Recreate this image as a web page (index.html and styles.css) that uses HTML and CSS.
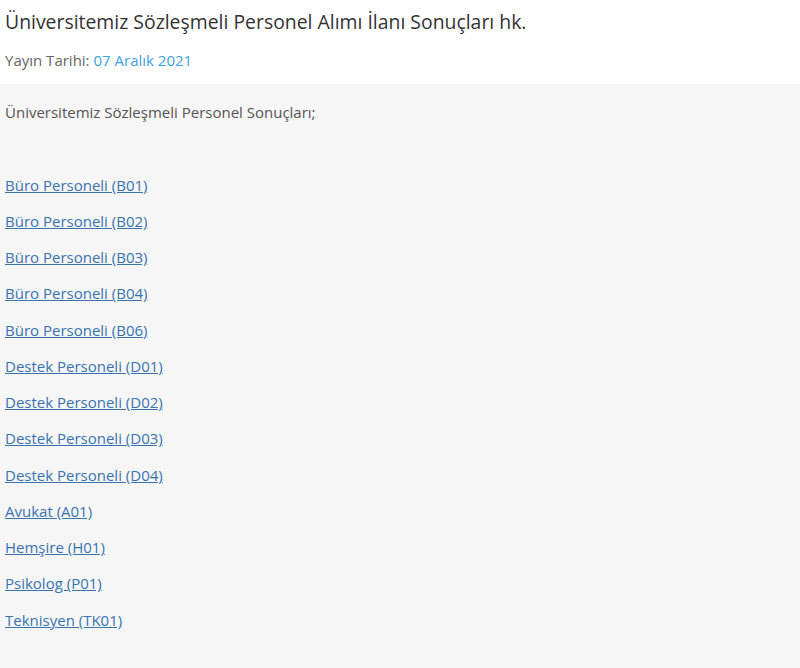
FILE: index.html
```html
<!DOCTYPE html>
<html lang="tr">
<head>
<meta charset="utf-8">
<title>Duyuru</title>
<link rel="stylesheet" href="styles.css">
</head>
<body>
<div class="page">
  <header class="head">
    <h1 class="title">Üniversitemiz Sözleşmeli Personel Alımı İlanı Sonuçları hk.</h1>
    <div class="meta">Yayın Tarihi: <span class="date">07 Aralık 2021</span></div>
  </header>
  <section class="content">
    <p class="para">Üniversitemiz Sözleşmeli Personel Sonuçları;</p>
    <p class="para">&nbsp;</p>
    <p class="para"><a href="#">Büro Personeli (B01)</a></p>
    <p class="para"><a href="#">Büro Personeli (B02)</a></p>
    <p class="para"><a href="#">Büro Personeli (B03)</a></p>
    <p class="para"><a href="#">Büro Personeli (B04)</a></p>
    <p class="para"><a href="#">Büro Personeli (B06)</a></p>
    <p class="para"><a href="#">Destek Personeli (D01)</a></p>
    <p class="para"><a href="#">Destek Personeli (D02)</a></p>
    <p class="para"><a href="#">Destek Personeli (D03)</a></p>
    <p class="para"><a href="#">Destek Personeli (D04)</a></p>
    <p class="para"><a href="#">Avukat (A01)</a></p>
    <p class="para"><a href="#">Hemşire (H01)</a></p>
    <p class="para"><a href="#">Psikolog (P01)</a></p>
    <p class="para"><a href="#">Teknisyen (TK01)</a></p>
  </section>
</div>
</body>
</html>
```

FILE: styles.css
```css
html, body {
  margin: 0;
  padding: 0;
  height: 100%;
  background: #f6f6f6;
}
body {
  font-family: "Open Sans", "Liberation Sans", sans-serif;
}
.page {
  min-height: 100%;
  display: flex;
  flex-direction: column;
}
.head {
  background: #ffffff;
  padding: 8px 5px 0 5px;
  height: 76px;
  box-sizing: content-box;
}
.title {
  margin: 0;
  font-size: 19.4px;
  font-weight: 400;
  line-height: 28px;
  color: #333333;
}
.meta {
  margin-top: 14px;
  font-size: 15px;
  line-height: 20px;
  color: #666666;
}
.date {
  color: #3ca2e0;
}
.content {
  flex: 1;
  background: #f6f6f6;
  padding: 18px 5px 20px 5px;
}
.para {
  margin: 0 0 16.25px 0;
  font-size: 15px;
  line-height: 20px;
  color: #555555;
}
.para a {
  color: #3873b0;
  text-decoration: underline;
}
```
